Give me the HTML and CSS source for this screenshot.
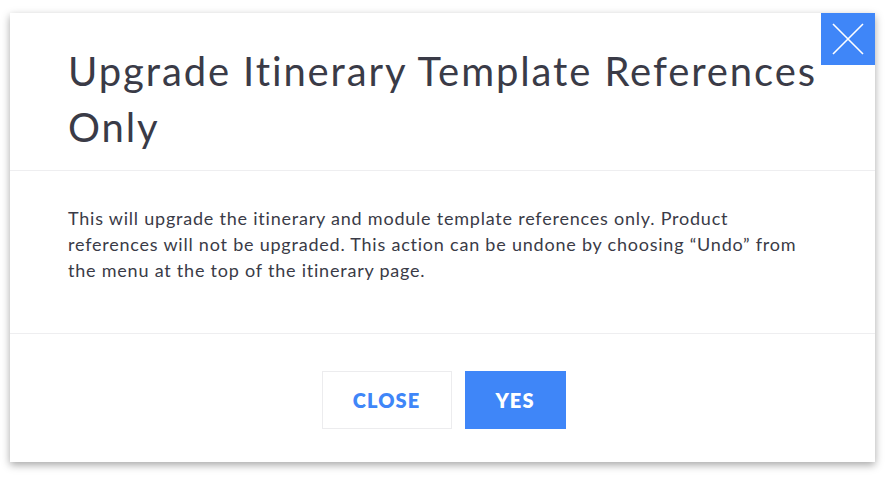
FILE: index.html
```html
<!DOCTYPE html>
<html>
<head>
<meta charset="utf-8">
<link rel="stylesheet" href="styles.css">
</head>
<body>
<div class="modal">
  <button class="close-x" aria-label="Close">
    <svg width="34" height="34" viewBox="0 0 34 34"><path d="M2 2 L32 32 M32 2 L2 32" stroke="#fff" stroke-width="1.6" fill="none"/></svg>
  </button>
  <div class="modal-header">
    <h1 class="title">Upgrade Itinerary Template References Only</h1>
  </div>
  <div class="modal-body">
    <p class="text">This will upgrade the itinerary and module template references only. Product references will not be upgraded. This action can be undone by choosing “Undo” from the menu at the top of the itinerary page.</p>
  </div>
  <div class="modal-footer">
    <button class="btn btn-close">CLOSE</button>
    <button class="btn btn-yes">YES</button>
  </div>
</div>
</body>
</html>
```
FILE: styles.css
```css
html, body {
  margin: 0;
  padding: 0;
  background: #fff;
}
body {
  padding: 13px 13px 16px 10px;
  font-family: Lato, "Open Sans", sans-serif;
  color: #3a3b47;
}
.modal {
  position: relative;
  width: 865px;
  height: 449px;
  background: #fff;
  box-shadow: 0 3px 8px rgba(0,0,0,0.35);
  display: flex;
  flex-direction: column;
}
.close-x {
  position: absolute;
  top: 0;
  right: 0;
  width: 54px;
  height: 52px;
  border: 0;
  padding: 0;
  background: #3f86f8;
  display: flex;
  align-items: center;
  justify-content: center;
}
.modal-header {
  height: 158px;
  border-bottom: 1px solid #eeeef0;
  padding: 0 40px 0 58px;
  box-sizing: border-box;
}
.title {
  margin: 0;
  padding-top: 30px;
  font-size: 40px;
  font-weight: 400;
  line-height: 56px;
  letter-spacing: 1.9px;
}
.modal-body {
  height: 163px;
  border-bottom: 1px solid #eeeef0;
  padding: 0 58px;
  box-sizing: border-box;
}
.text {
  margin: 0;
  padding-top: 34px;
  font-size: 18px;
  line-height: 26px;
  letter-spacing: 0.78px;
}
.modal-footer {
  flex: 1;
  display: flex;
  justify-content: center;
  align-items: flex-start;
  padding-top: 37px;
  padding-left: 2px;
  gap: 13px;
}
.btn {
  height: 58px;
  font-family: Lato, sans-serif;
  font-weight: 800;
  font-size: 20px;
  letter-spacing: 1.1px;
  border: 1px solid #ececee;
  cursor: pointer;
}
.btn-close {
  width: 130px;
  background: #fff;
  color: #3f86f8;
}
.btn-yes {
  width: 101px;
  background: #3f86f8;
  border-color: #3f86f8;
  color: #fff;
}
```
